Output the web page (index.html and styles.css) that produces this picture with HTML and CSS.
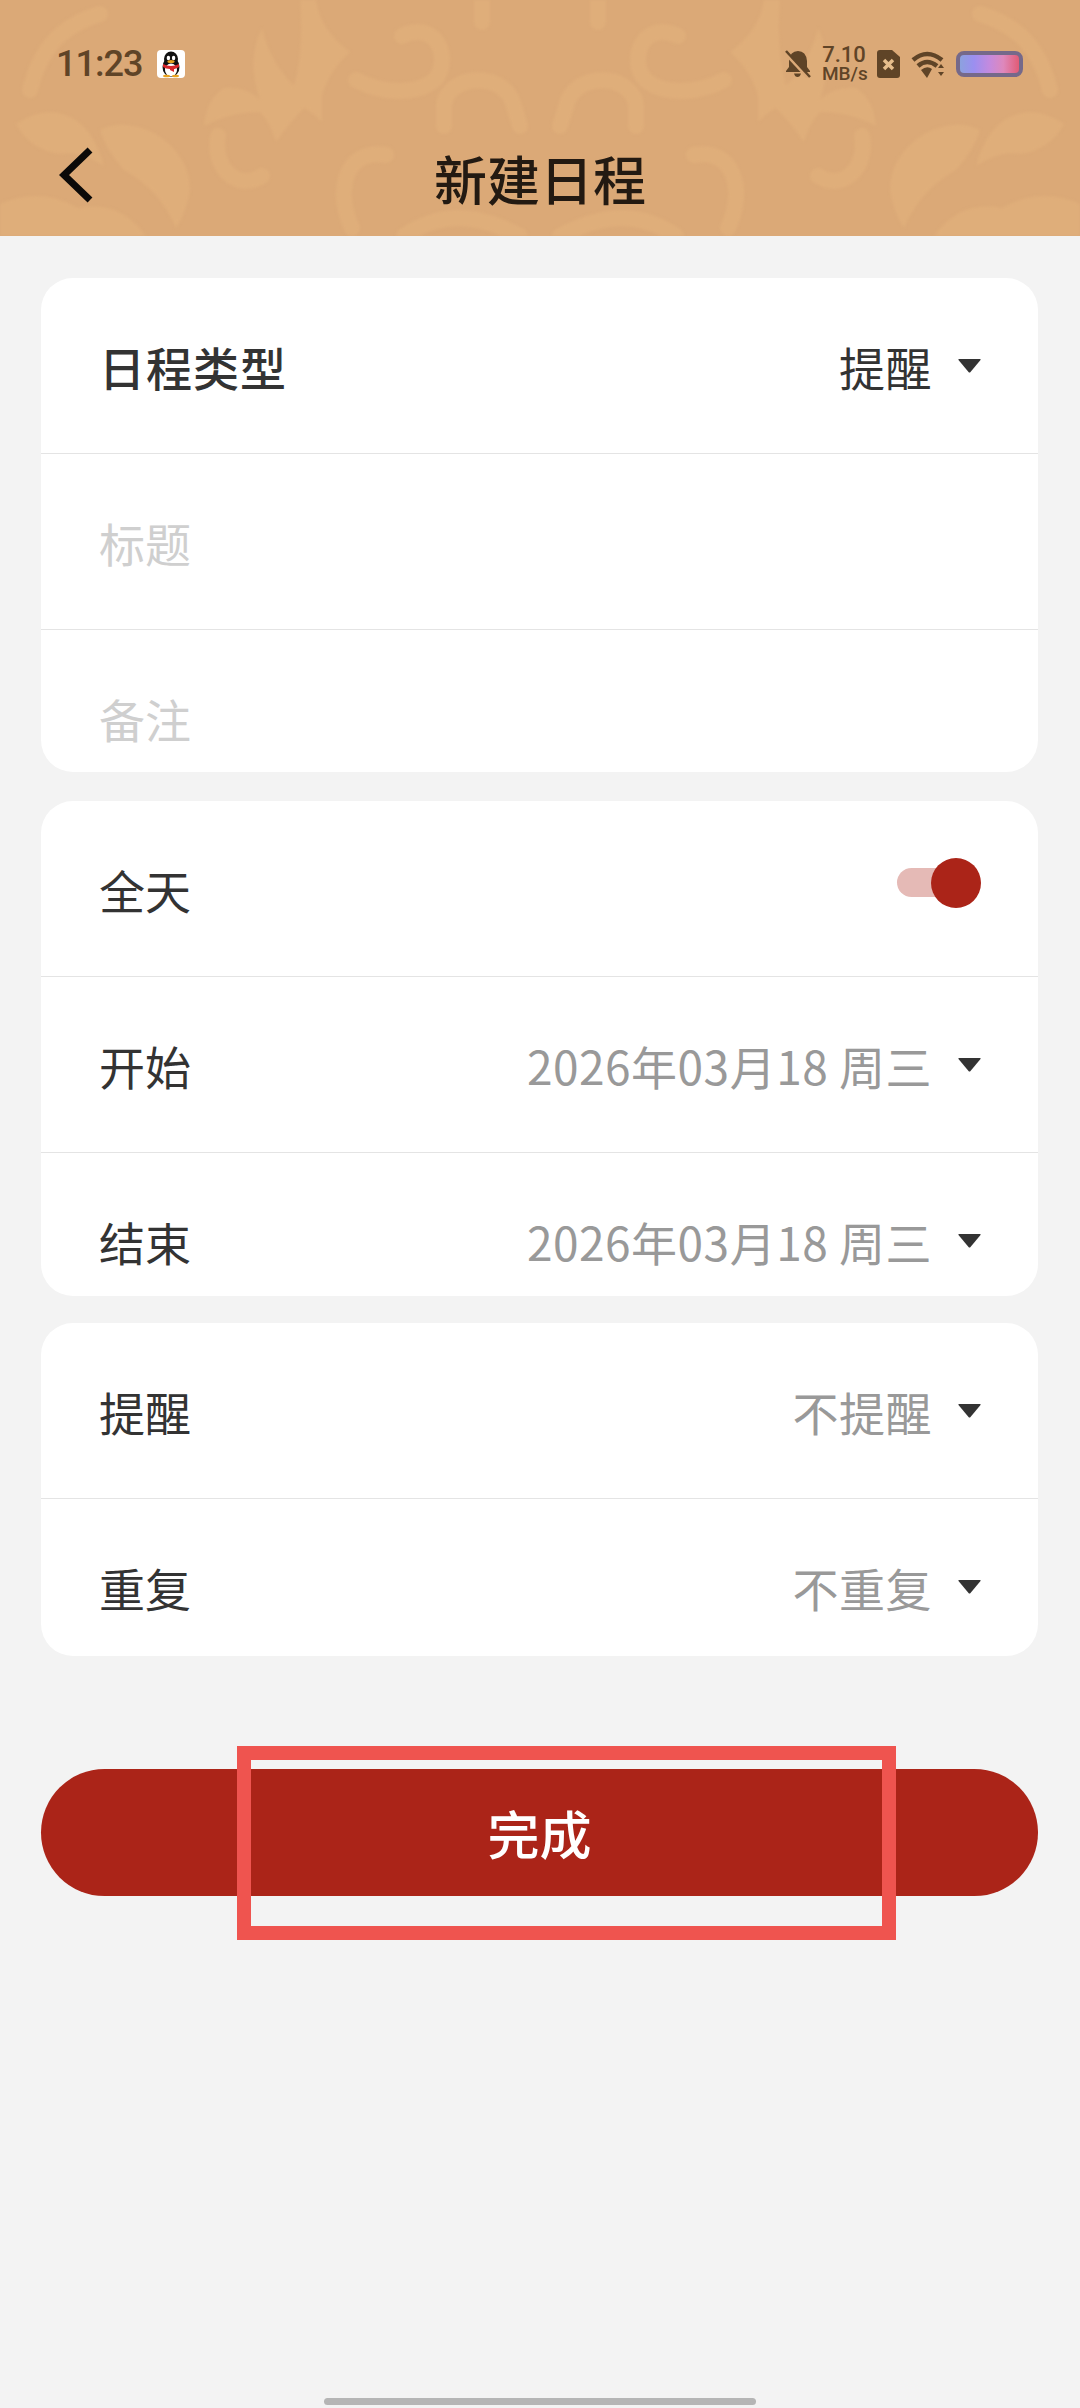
FILE: index.html
```html
<!doctype html>

<html lang="zh-CN">
<head>
    <meta charset="utf-8">
    <title>新建日程</title>
    <link rel="stylesheet" href="styles.css">
</head>

<body>
<header class="header">
    <svg class="header-pattern" viewBox="0 0 1080 236" aria-hidden="true">
        <defs>
            <g id="ornament">
                <path class="orn-fill" d="M204 126 Q206 100 224 88 Q246 86 260 100 Q246 60 262 28 Q270 62 294 86 Q304 50 300 0 L316 0 Q320 30 350 52 Q328 72 322 96 L322 122 Q312 112 304 108 Q290 122 276 142 Q270 122 260 112 Q230 112 204 126 Z"/>
                <path class="orn-line" d="M402 36 C 442 18, 452 68, 432 82 C 412 96, 378 92, 356 80"/>
                <path class="orn-line" d="M444 126 L444 106 C 446 76, 498 70, 512 100 L520 126"/>
                <path class="orn-line" d="M386 155 C 346 148, 334 190, 352 228"/>
                <path class="orn-line" d="M218 136 C 212 166, 236 192, 262 176"/>
                <path class="orn-line" d="M482 0 L482 22"/>
                <path class="orn-line" d="M100 14 C 60 26, 40 50, 30 90"/>
                <path class="orn-fill" d="M16 124 Q40 108 62 114 Q92 122 104 166 Q80 150 60 154 Q30 150 16 124 Z"/>
                <path class="orn-fill" d="M100 130 Q124 118 156 134 Q190 156 190 190 Q186 214 176 228 Q160 190 124 170 Q106 150 100 130 Z"/>
                <path class="orn-fill" d="M0 204 Q40 186 78 208 Q120 200 146 236 L0 236 Z"/>
                <path class="orn-line" d="M404 236 C 440 212, 474 212, 520 236"/>
            </g>
        </defs>
        <use href="#ornament"/>
        <use href="#ornament" transform="translate(1080,0) scale(-1,1)"/>
    </svg>

    <div class="status-bar">
        <span class="status-time">11:23</span>
        <svg class="icon-qq" viewBox="0 0 28 28">
            <rect width="28" height="28" rx="4" fill="#fff"/>
            <ellipse cx="14" cy="17" rx="8.500" ry="10" fill="#111"/>
            <ellipse cx="14" cy="9" rx="7" ry="7.500" fill="#111"/>
            <ellipse cx="14" cy="20" rx="6" ry="6.500" fill="#fff"/>
            <ellipse cx="11.400" cy="8" rx="1.700" ry="2.200" fill="#fff"/>
            <ellipse cx="16.600" cy="8" rx="1.700" ry="2.200" fill="#fff"/>
            <ellipse cx="14" cy="11.400" rx="3.600" ry="1.500" fill="#eaa31e"/>
            <path d="M6 14 Q14 18 22 14 L22 17 Q18 19 17 19 L17 22 L13 20 L13 19 Q9 19 6 17 Z" fill="#d8262a"/>
            <ellipse cx="9.500" cy="26" rx="3.500" ry="1.300" fill="#eaa31e"/>
            <ellipse cx="18.500" cy="26" rx="3.500" ry="1.300" fill="#eaa31e"/>
        </svg>
        <div class="status-icons">
            <svg class="icon-bell" viewBox="0 0 26 28">
                <path class="icon-solid" d="M13 1 Q21 1 22 11 L22 17 L25 21 L25 22 L1 22 L1 21 L4 17 L4 11 Q5 1 13 1 Z M9 23.500 L16 23.500 Q15 27 12.500 27 Q10 27 9 23.500 Z"/>
                <path class="icon-slash-gap" d="M0 3 L24 29"/>
                <path class="icon-slash" d="M1 1 L25 27"/>
            </svg>
            <div class="status-speed">7.10<br>MB/s</div>
            <svg class="icon-sim" viewBox="0 0 23 28">
                <path class="icon-solid" d="M3 0 L15 0 L23 7 L23 25 Q23 28 20 28 L3 28 Q0 28 0 25 L0 3 Q0 0 3 0 Z"/>
                <path class="icon-cross" d="M7 10 L16 19 M16 10 L7 19"/>
            </svg>
            <svg class="icon-wifi" viewBox="0 0 34 27">
                <path class="icon-arc" d="M2 9 Q16 -3 31 9"/>
                <path class="icon-arc" d="M7 15 Q16 7 26 15"/>
                <path class="icon-solid" d="M10 19 Q16 14 21 18 L16 27 Z"/>
                <path class="icon-solid" d="M27 17 L30 13 L33 17 Z M27 21 L33 21 L30 25 Z"/>
            </svg>
            <svg class="icon-battery" viewBox="0 0 67 26">
                <defs>
                    <linearGradient id="charge">
                        <stop offset="0" stop-color="#8aa4dc"/>
                        <stop offset="0.25" stop-color="#9b8ff0"/>
                        <stop offset="0.5" stop-color="#c48ade"/>
                        <stop offset="0.72" stop-color="#de88bc"/>
                        <stop offset="1" stop-color="#e2566c"/>
                    </linearGradient>
                </defs>
                <rect x="2" y="2" width="63" height="22" rx="6" fill="url(#charge)" stroke="#75698a" stroke-width="4"/>
            </svg>
        </div>
    </div>

    <div class="nav-bar">
        <svg class="icon-back" viewBox="0 0 34 56">
            <path d="M31 3 L5 28 L31 53"/>
        </svg>
        <h1 class="nav-title">新建日程</h1>
    </div>
</header>

<main class="content">
    <section class="card card-basic">
        <div class="row">
            <span class="label label-strong">日程类型</span>
            <div class="picker">
                <span class="value value-dark">提醒</span>
                <svg class="caret" viewBox="0 0 23 14"><path d="M1 0 L22 0 Q23 0 22.500 1 L12.500 13 Q11.500 14 10.500 13 L0.500 1 Q0 0 1 0 Z"/></svg>
            </div>
        </div>
        <div class="row">
            <span class="placeholder">标题</span>
        </div>
        <div class="row">
            <span class="placeholder">备注</span>
        </div>
    </section>

    <section class="card card-time">
        <div class="row">
            <span class="label">全天</span>
            <div class="toggle">
                <span class="toggle-track"></span>
                <span class="toggle-knob"></span>
            </div>
        </div>
        <div class="row">
            <span class="label">开始</span>
            <div class="picker">
                <span class="value">2026年03月18 周三</span>
                <svg class="caret" viewBox="0 0 23 14"><path d="M1 0 L22 0 Q23 0 22.500 1 L12.500 13 Q11.500 14 10.500 13 L0.500 1 Q0 0 1 0 Z"/></svg>
            </div>
        </div>
        <div class="row">
            <span class="label">结束</span>
            <div class="picker">
                <span class="value">2026年03月18 周三</span>
                <svg class="caret" viewBox="0 0 23 14"><path d="M1 0 L22 0 Q23 0 22.500 1 L12.500 13 Q11.500 14 10.500 13 L0.500 1 Q0 0 1 0 Z"/></svg>
            </div>
        </div>
    </section>

    <section class="card card-remind">
        <div class="row">
            <span class="label">提醒</span>
            <div class="picker">
                <span class="value">不提醒</span>
                <svg class="caret" viewBox="0 0 23 14"><path d="M1 0 L22 0 Q23 0 22.500 1 L12.500 13 Q11.500 14 10.500 13 L0.500 1 Q0 0 1 0 Z"/></svg>
            </div>
        </div>
        <div class="row">
            <span class="label">重复</span>
            <div class="picker">
                <span class="value">不重复</span>
                <svg class="caret" viewBox="0 0 23 14"><path d="M1 0 L22 0 Q23 0 22.500 1 L12.500 13 Q11.500 14 10.500 13 L0.500 1 Q0 0 1 0 Z"/></svg>
            </div>
        </div>
    </section>

    <div class="submit">
        <button class="submit-btn">完成</button>
        <div class="highlight"></div>
    </div>
</main>

<div class="gesture-bar"></div>
</body>
</html>
```

FILE: styles.css
```css
* {
    box-sizing: border-box;
}
html, body {
    height: 100%;
}
body {
    margin: 0;
    display: flex;
    flex-direction: column;
    background-color: #f3f3f3;
    font-family: "Noto Sans CJK SC", "Noto Sans", sans-serif;
    color: #333;
}

/* header */
.header {
    position: relative;
    height: 236px;
    background-color: #dba977;
    overflow: hidden;
}
.header-pattern {
    position: absolute;
    left: 0;
    top: 0;
    width: 1080px;
    height: 236px;
    filter: blur(1.500px);
}
.orn-fill {
    fill: #dfae7a;
}
.orn-line {
    fill: none;
    stroke: #dfae7a;
    stroke-width: 16;
    stroke-linecap: round;
}

.status-bar {
    position: relative;
    display: flex;
    align-items: center;
    height: 124px;
    padding: 4px 57px 0 56px;
}
.status-time {
    font-family: Roboto, sans-serif;
    font-size: 36px;
    font-weight: 500;
    letter-spacing: -1px;
    color: #5f4427;
}
.icon-qq {
    width: 28px;
    height: 28px;
    margin-left: 15px;
}
.status-icons {
    display: flex;
    align-items: center;
    gap: 11px;
    margin-left: auto;
}
.icon-solid {
    fill: #5f4427;
}
.icon-slash {
    fill: none;
    stroke: #5f4427;
    stroke-width: 2.500;
}
.icon-slash-gap {
    fill: none;
    stroke: #dba977;
    stroke-width: 3;
}
.icon-cross {
    fill: none;
    stroke: #e6bd8c;
    stroke-width: 3.500;
}
.icon-arc {
    fill: none;
    stroke: #5f4427;
    stroke-width: 4.500;
}
.icon-bell {
    width: 26px;
    height: 28px;
}
.status-speed {
    width: 44px;
    text-align: center;
    font-family: Roboto, sans-serif;
    font-size: 19px;
    font-weight: 500;
    line-height: 18px;
    color: #5f4427;
}
.status-speed::first-line {
    font-size: 22px;
    line-height: 20px;
}
.icon-sim {
    width: 23px;
    height: 28px;
}
.icon-wifi {
    width: 34px;
    height: 27px;
}
.icon-battery {
    width: 67px;
    height: 26px;
}

.nav-bar {
    position: relative;
    display: grid;
    grid-template-columns: 1fr auto 1fr;
    align-items: center;
    height: 112px;
    padding: 0 57px;
}
.icon-back {
    width: 34px;
    height: 56px;
    margin: 0 0 10px 2px;
}
.icon-back path {
    fill: none;
    stroke: #0c0a08;
    stroke-width: 7;
}
.nav-title {
    margin: 0 0 4px;
    font-size: 53px;
    font-weight: 500;
    line-height: 1;
    color: #231a12;
}

/* form */
.content {
    padding: 42px 42px 0 41px;
}
.card {
    background-color: #fff;
    border-radius: 32px;
    overflow: hidden;
}
.card-basic {
    height: 494px;
}
.card-time {
    height: 495px;
    margin-top: 29px;
}
.card-remind {
    height: 333px;
    margin-top: 27px;
}
.row {
    display: flex;
    align-items: center;
    justify-content: space-between;
    height: 176px;
    padding: 0 57px 0 58px;
    border-bottom: 1px solid #e4e4e4;
}
.row:last-child {
    border-bottom: 0;
}
.label, .value, .placeholder {
    font-size: 46px;
    line-height: 1;
}
.label-strong {
    font-weight: 500;
    letter-spacing: 1px;
}
.placeholder {
    color: #cfcfcf;
}
.picker {
    display: flex;
    align-items: center;
    gap: 26px;
}
.value {
    color: #999;
    letter-spacing: 0.500px;
}
.value-dark {
    color: #333;
}
.caret {
    width: 23px;
    height: 14px;
    fill: #333;
}
.toggle {
    display: flex;
    align-items: center;
    margin-bottom: 12px;
}
.toggle-track {
    width: 60px;
    height: 29px;
    border-radius: 15px;
    background-color: #e5bab6;
}
.toggle-knob {
    width: 50px;
    height: 50px;
    margin-left: -26px;
    border-radius: 50%;
    background-color: #ab2418;
}

.submit {
    position: relative;
    margin-top: 113px;
}
.submit-btn {
    display: block;
    width: 100%;
    height: 127px;
    border: 0;
    border-radius: 64px;
    background-color: #ab2418;
    font-family: inherit;
    font-size: 52px;
    font-weight: 500;
    color: #fff;
}
.highlight {
    position: absolute;
    left: 196px;
    top: -23px;
    width: 659px;
    height: 194px;
    border: 14px solid #ef544f;
}

.gesture-bar {
    width: 432px;
    height: 7px;
    margin: auto auto 3px;
    border-radius: 4px;
    background-color: #b5b5b5;
}
```
